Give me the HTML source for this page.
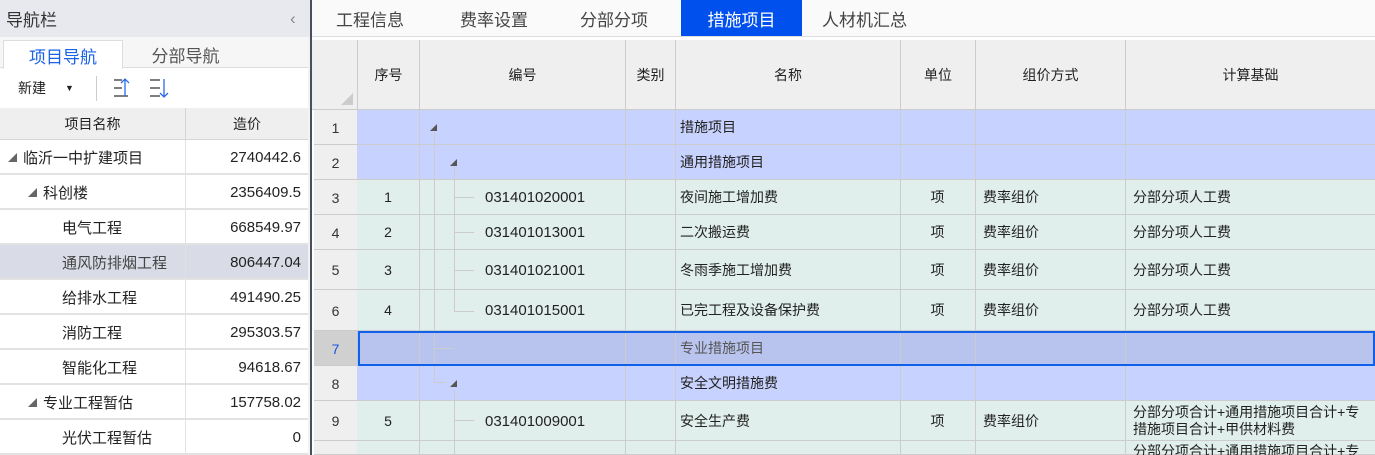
<!DOCTYPE html>
<html style="width:1375px;height:455px;overflow:hidden"><head><meta charset="utf-8"><style>
*{margin:0;padding:0;box-sizing:border-box}
body{width:1375px;height:455px;overflow:hidden;background:#fff;font-family:"Liberation Sans","Noto Sans CJK SC",sans-serif;font-size:14px;color:#222;position:relative}
.a{position:absolute}
.c{position:absolute;display:flex;align-items:center;white-space:nowrap}
</style></head><body>
<div class="a" style="left:0;top:0;width:310px;height:37px;background:#e8e9ee"></div>
<div class="c" style="left:6px;top:0;height:37px;font-size:17px;color:#333">导航栏</div>
<div class="c" style="left:290px;top:0;height:37px;font-size:17px;color:#888">‹</div>
<div class="a" style="left:0;top:37px;width:310px;height:31px;background:#f6f6f6;border-bottom:1px solid #ddd"></div>
<div class="c" style="left:3px;top:40px;width:120px;height:29px;background:#fff;border:1px solid #ddd;border-bottom:none;justify-content:center;font-size:17px;color:#1a62e8">项目导航</div>
<div class="c" style="left:123px;top:40px;width:125px;height:28px;justify-content:center;font-size:17px;color:#555">分部导航</div>
<div class="c" style="left:18px;top:68px;height:40px;font-size:14px">新建</div>
<div class="c" style="left:65px;top:68px;height:40px;font-size:9px">▼</div>
<div class="a" style="left:96px;top:76px;width:1px;height:25px;background:#ccc"></div>
<svg class="a" style="left:112px;top:76px" width="60" height="26"><g stroke-width="1.3" fill="none"><path d="M2 4h8M2 12h8M2 20h14" stroke="#333"/><path d="M13 20V3M9 7l4-4 4 4" stroke="#2a6ae8"/><path d="M38 4h10M38 12h10M38 20h10" stroke="#333"/><path d="M52 3v18M48 17l4 4 4-4" stroke="#2a6ae8"/></g></svg>
<div class="a" style="left:0;top:108px;width:308px;height:32px;background:#efefef;border-bottom:1px solid #d6d6d6"></div>
<div class="c" style="left:0;top:108px;width:185px;height:32px;justify-content:center;font-size:14px">项目名称</div>
<div class="c" style="left:185px;top:108px;width:123px;height:32px;justify-content:center;font-size:14px;border-left:1px solid #d6d6d6">造价</div>
<div id="lrows"></div>
<div class="a" style="left:308px;top:37px;width:2px;height:418px;background:#f2f2f2"></div>
<div class="a" style="left:310px;top:0;width:2px;height:455px;background:#4a4f5c"></div>
<div class="a" style="left:312px;top:0;width:1063px;height:37px;background:#fafafa;border-bottom:1px solid #ddd"></div>
<div class="c" style="left:336px;top:0;height:36px;font-size:17px;color:#444">工程信息</div>
<div class="c" style="left:460px;top:0;height:36px;font-size:17px;color:#444">费率设置</div>
<div class="c" style="left:580px;top:0;height:36px;font-size:17px;color:#444">分部分项</div>
<div class="c" style="left:681px;top:0;width:121px;height:36px;background:#0050ee;color:#fff;justify-content:center;font-size:17px">措施项目</div>
<div class="c" style="left:822px;top:0;height:36px;font-size:17px;color:#444">人材机汇总</div>
<div class="a" style="left:312px;top:37px;width:1063px;height:3px;background:#fff"></div>
<div id="grid"></div>
<script>
var L=[["◢ 临沂一中扩建项目","2740442.6",8],["◢ 科创楼","2356409.5",28],["电气工程","668549.97",62],["通风防排烟工程","806447.04",62,1],["给排水工程","491490.25",62],["消防工程","295303.57",62],["智能化工程","94618.67",62],["◢ 专业工程暂估","157758.02",28],["光伏工程暂估","0",62]];
var h='';L.forEach(function(r,i){var y=140+i*35;var bg=r[3]?'#d9dce6':'#fff';
h+='<div class="a" style="left:0;top:'+y+'px;width:308px;height:35px;background:'+bg+';border-bottom:2px solid #e2e2e2"></div>';
h+='<div class="c" style="left:'+r[2]+'px;top:'+y+'px;height:35px;font-size:15px;color:'+(r[3]?'#444':'#222')+'">'+r[0].replace('◢','<span style="font-size:9px;color:#666;margin-right:6px">◢</span>')+'</div>';
h+='<div class="c" style="left:185px;top:'+y+'px;width:116px;height:35px;justify-content:flex-end;font-size:15px;border-left:1px solid #e2e2e2">'+r[1]+'</div>';});
document.getElementById('lrows').innerHTML=h;
var cols=[314,357,419,625,675,900,975,1125,1375];
var hd=['','序号','编号','类别','名称','单位','组价方式','计算基础'];
var g='<div class="a" style="left:312px;top:40px;width:1063px;height:70px;background:#efefef;border-bottom:1px solid #ccc"></div>';
for(var k=1;k<8;k++){g+='<div class="c" style="left:'+cols[k]+'px;top:40px;width:'+(cols[k+1]-cols[k])+'px;height:70px;justify-content:center;font-size:14px;border-left:1px solid #ccc">'+hd[k]+'</div>';}
g+='<div class="a" style="left:341px;top:93px;width:0;height:0;border-left:12px solid transparent;border-bottom:12px solid #ccc"></div>';
var R=[[110,145,'g','1','','','措施项目','','','',1],[145,180,'g','2','','','通用措施项目','','','',2],
[180,215,'d','3','1','031401020001','夜间施工增加费','项','费率组价','分部分项人工费'],
[215,250,'d','4','2','031401013001','二次搬运费','项','费率组价','分部分项人工费'],
[250,290,'d','5','3','031401021001','冬雨季施工增加费','项','费率组价','分部分项人工费'],
[290,331,'d','6','4','031401015001','已完工程及设备保护费','项','费率组价','分部分项人工费'],
[331,366,'s','7','','','专业措施项目','','',''],
[366,401,'g','8','','','安全文明措施费','','','',2],
[401,441,'d','9','5','031401009001','安全生产费','项','费率组价','分部分项合计+通用措施项目合计+专<br>措施项目合计+甲供材料费'],
[441,455,'d','','','','','','','']];
R.forEach(function(r){var y=r[0],hh=r[1]-r[0];var bg=r[2]=='g'?'#c8d2fe':r[2]=='s'?'#b8c4ee':'#e0efeb';
g+='<div class="a" style="left:314px;top:'+y+'px;width:43px;height:'+hh+'px;background:'+(r[2]=='s'?'#d0d0d0':'#efefef')+';border-bottom:1px solid #ccc"></div>';
g+='<div class="c" style="left:314px;top:'+y+'px;width:43px;height:'+hh+'px;justify-content:center;color:'+(r[2]=='s'?'#1a55e0':'#333')+'">'+r[3]+'</div>';
g+='<div class="a" style="left:357px;top:'+y+'px;width:1018px;height:'+hh+'px;background:'+bg+';border-bottom:1px solid #ccc"></div>';
for(var k=2;k<8;k++)g+='<div class="a" style="left:'+cols[k]+'px;top:'+y+'px;width:1px;height:'+hh+'px;background:#ccc"></div>';
var t=[r[4],r[5],'',r[6],r[7],r[8],r[9]];
var al=['center','flex-start','center','flex-start','center','flex-start','flex-start'];
var pl=[0,66,0,5,0,8,8];
for(var k=0;k<7;k++){if(!t[k])continue;g+='<div class="c" style="left:'+cols[k+1]+'px;top:'+y+'px;width:'+(cols[k+2]-cols[k+1])+'px;height:'+hh+'px;justify-content:'+al[k]+';padding-left:'+pl[k]+'px;font-size:'+(k==1?15:14)+'px;line-height:17px;overflow:hidden;color:'+(r[2]=='s'?'#555':'#222')+'">'+t[k]+'</div>';}
if(r[10]){var x=r[10]==1?430:450;g+='<div class="a" style="left:'+x+'px;top:'+(y+hh/2-4)+'px;width:0;height:0;border-left:7px solid transparent;border-bottom:7px solid #555"></div>';}
});
g+='<div class="c" style="left:1125px;top:441px;width:250px;height:14px;padding-left:8px;align-items:flex-start;overflow:hidden;font-size:14px;line-height:17px;margin-top:0"><span style="margin-top:2px">分部分项合计+通用措施项目合计+专</span></div>';
g+='<div class="a" style="left:434px;top:132px;width:1px;height:250px;background:#ccc"></div>';
g+='<div class="a" style="left:454px;top:167px;width:1px;height:145px;background:#ccc"></div>';
g+='<div class="a" style="left:454px;top:390px;width:1px;height:65px;background:#ccc"></div>';
[197,232,270,311,420].forEach(function(y){g+='<div class="a" style="left:454px;top:'+y+'px;width:20px;height:1px;background:#ccc"></div>';});
g+='<div class="a" style="left:434px;top:348px;width:20px;height:1px;background:#ccc"></div>';
g+='<div class="a" style="left:434px;top:382px;width:12px;height:1px;background:#ccc"></div>';
g+='<div class="a" style="left:358px;top:331px;width:1017px;height:35px;border:2px solid #1060ea"></div>';
document.getElementById('grid').innerHTML=g;
</script>
</body></html>
